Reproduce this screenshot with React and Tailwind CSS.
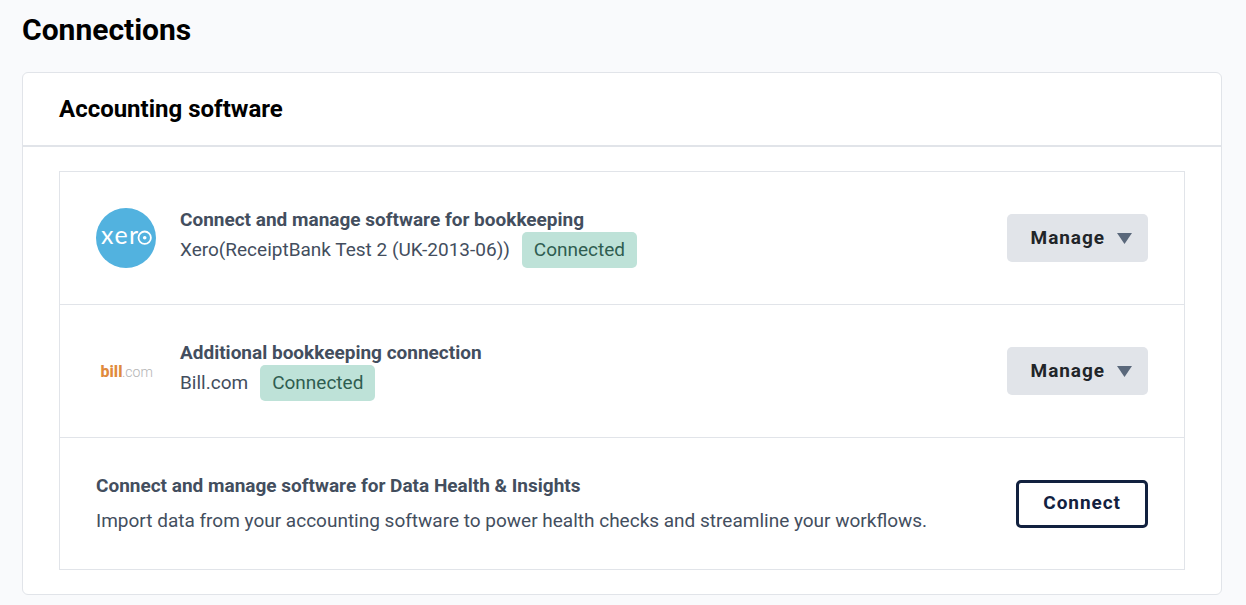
import React from 'react';

const XeroLogo = () => (
  <svg viewBox="0 0 60 60" className="w-[60px] h-[60px]" role="img" aria-label="Xero">
    <circle cx="30" cy="30" r="30" fill="#52b2df" />
    <text x="5 18.5 33" y="36.3" fontFamily="Lato, sans-serif" fontSize="25" fill="#fff">xer</text>
    <circle cx="48.7" cy="29.7" r="6.2" fill="none" stroke="#fff" strokeWidth="1.8" />
    <circle cx="48.7" cy="29.7" r="1.8" fill="#fff" />
  </svg>
);

const BillLogo = () => (
  <svg viewBox="0 0 60 60" className="w-[60px] h-[60px]" role="img" aria-label="Bill.com">
    <text x="4.5" y="36" fontFamily="Roboto, sans-serif" fontSize="16" fontWeight="800" fill="#e08a3c">bill</text>
    <text x="26" y="36" fontFamily="Roboto, sans-serif" fontSize="14" fontWeight="300" fill="#b4b4b4">.com</text>
  </svg>
);

const connections = [
  {
    title: 'Connect and manage software for bookkeeping',
    name: 'Xero(ReceiptBank Test 2 (UK-2013-06))',
    Logo: XeroLogo,
  },
  {
    title: 'Additional bookkeeping connection',
    name: 'Bill.com',
    Logo: BillLogo,
  },
];

const ConnectionRow = ({ title, name, Logo }) => (
  <li className="flex items-center gap-6 p-9">
    <Logo />
    <div className="flex-1">
      <h3 className="font-bold leading-6">{title}</h3>
      <div className="flex items-center gap-3">
        <span>{name}</span>
        <span className="rounded-[5px] bg-[#bee2d8] px-3 py-1.5 leading-6 text-[#2f5d50]">Connected</span>
      </div>
    </div>
    <button
      type="button"
      className="flex items-center gap-3 h-12 rounded-[5px] bg-[#e1e4e9] pl-6 pr-4 font-bold tracking-wider text-[#212529]"
    >
      Manage
      <svg viewBox="0 0 15 11" className="w-[15px] h-[11px]" aria-hidden="true">
        <path d="M0 0H15L7.5 11Z" fill="#5a687b" />
      </svg>
    </button>
  </li>
);

export default function App() {
  return (
    <main className="min-h-screen bg-[#f9fafc] pl-[22px] pr-6 pt-3 pb-2.5 font-['Roboto',sans-serif] text-[19px] text-[#434e5e]">
      <h1 className="mb-6 text-[30px] leading-9 font-bold text-black">Connections</h1>

      <section className="rounded-md border border-[#e1e4e9] bg-white">
        <header className="border-b-2 border-[#e1e4e9] px-9 py-[18px]">
          <h2 className="text-2xl leading-9 font-bold text-black">Accounting software</h2>
        </header>

        <div className="px-9 py-6">
          <ul className="divide-y divide-[#e1e4e9] border border-[#e1e4e9]">
            {connections.map((connection) => (
              <ConnectionRow key={connection.title} {...connection} />
            ))}

            <li className="flex items-center gap-6 px-9 py-8">
              <div className="flex-1">
                <h3 className="mb-[3px] font-bold leading-8">Connect and manage software for Data Health &amp; Insights</h3>
                <p className="leading-8">
                  Import data from your accounting software to power health checks and streamline your workflows.
                </p>
              </div>
              <button
                type="button"
                className="h-12 rounded-[5px] border-3 border-[#12213f] px-6 font-bold tracking-wider text-[#12213f]"
              >
                Connect
              </button>
            </li>
          </ul>
        </div>
      </section>
    </main>
  );
}
